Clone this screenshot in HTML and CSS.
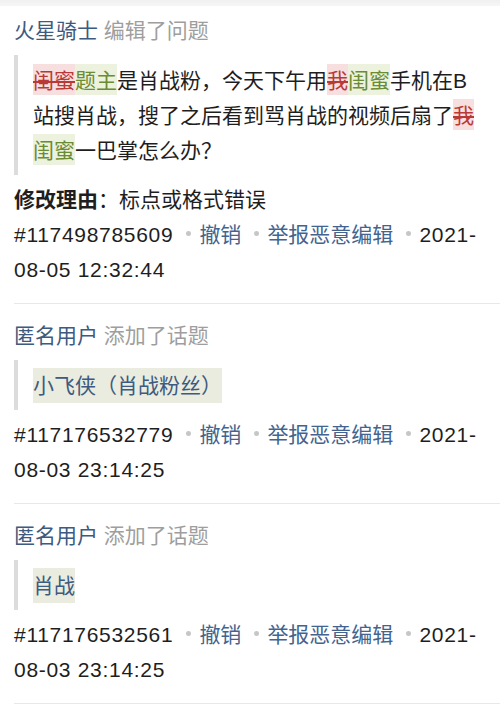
FILE: index.html
```html
<!DOCTYPE html>
<html lang="zh-CN">
<head>
  <meta charset="UTF-8" />
  <meta name="viewport" content="width=device-width, initial-scale=1.0"/>
  <title>编辑记录</title>
  <link rel="stylesheet" href="styles.css">
</head>
<body>
  <div class="top-bar"></div>

  <ul class="log-list">
    <li class="log-item">
      <div class="log-head"><span class="user">火星骑士</span> <span class="action">编辑了问题</span></div>
      <div class="quote">
        <span class="del">闺蜜</span><span class="ins">题主</span>是肖战粉，今天下午用<span class="del">我</span><span class="ins">闺蜜</span>手机在B站搜肖战，搜了之后看到骂肖战的视频后扇了<span class="del">我</span><span class="ins">闺蜜</span>一巴掌怎么办？
      </div>
      <div class="reason"><b>修改理由</b>：标点或格式错误</div>
      <div class="meta">
        <span class="num">#117498785609</span><span class="dot"></span><a href="#">撤销</a><span class="dot"></span><a href="#">举报恶意编辑</a><span class="dot"></span><span class="num">2021-<wbr>08-05 12:32:44</span>
      </div>
    </li>

    <li class="log-item">
      <div class="log-head"><span class="user">匿名用户</span> <span class="action">添加了话题</span></div>
      <div class="quote">
        <span class="topic">小飞侠（肖战粉丝）</span>
      </div>
      <div class="meta">
        <span class="num">#117176532779</span><span class="dot"></span><a href="#">撤销</a><span class="dot"></span><a href="#">举报恶意编辑</a><span class="dot"></span><span class="num">2021-<wbr>08-03 23:14:25</span>
      </div>
    </li>

    <li class="log-item">
      <div class="log-head"><span class="user">匿名用户</span> <span class="action">添加了话题</span></div>
      <div class="quote">
        <span class="topic">肖战</span>
      </div>
      <div class="meta">
        <span class="num">#117176532561</span><span class="dot"></span><a href="#">撤销</a><span class="dot"></span><a href="#">举报恶意编辑</a><span class="dot"></span><span class="num">2021-<wbr>08-03 23:14:25</span>
      </div>
    </li>
  </ul>
</body>
</html>
```

FILE: styles.css
```css
body {
  margin: 0;
  padding: 0;
  font-family: "Liberation Sans", "Noto Sans CJK SC", sans-serif;
  font-size: 21px;
  line-height: 35px;
  color: #1e1e1e;
  background: #fff;
  text-spacing-trim: space-all;
}

.top-bar {
  height: 6px;
  background: linear-gradient(#f0f0f0, #f6f6f6);
}

.log-list {
  list-style: none;
  margin: 0;
  padding: 0;
}

.log-item {
  margin-left: 14px;
  padding: 14px 15px 16px 0;
  border-bottom: 1px solid #e8e8e8;
}

.log-item:first-child {
  padding-top: 7px;
}

.user {
  color: #3d5a80;
}

.action {
  color: #9e9e9e;
}

.quote {
  margin-top: 7px;
  padding: 7.5px 0 7.5px 15px;
  border-left: 4px solid #dcdcdc;
}

.del {
  color: #b83a36;
  background: #f8dfdf;
  text-decoration: line-through;
  padding: 5px 0 3px;
}

.ins {
  color: #6a8c32;
  background: #edf2df;
  padding: 5px 0 3px;
}

.topic {
  color: #3d5a80;
  background: #e9ecde;
  padding: 6px 0;
}

.reason {
  margin-top: 7px;
}

.reason b {
  font-weight: bold;
}

.quote + .meta {
  margin-top: 7px;
}

.num {
  letter-spacing: 0.7px;
}

.meta a {
  color: #42648e;
  text-decoration: none;
}

.dot {
  display: inline-block;
  width: 5px;
  height: 5px;
  border-radius: 50%;
  background: #c6c6c6;
  margin: 0 8px 0 13px;
  vertical-align: 6px;
}
```
